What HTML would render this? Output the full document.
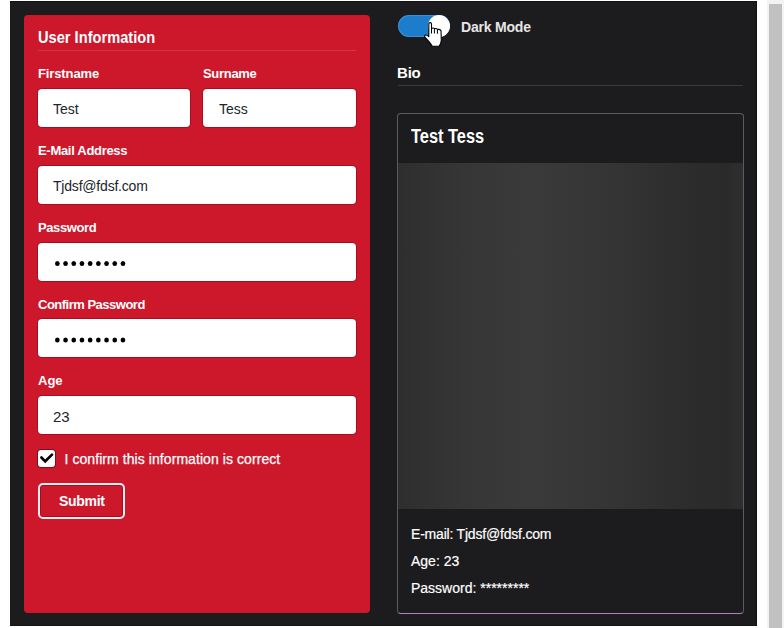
<!DOCTYPE html>
<html><head><meta charset="utf-8">
<style>
html,body{margin:0;padding:0;background:#fff;width:784px;height:628px;overflow:hidden;}
body{font-family:"Liberation Sans",sans-serif;position:relative;}
.a{position:absolute;white-space:nowrap;line-height:1;}
#app{position:absolute;left:10px;top:1px;width:746px;height:624px;background:#1c1c1e;border-top:1px solid #111;border-right:1px solid #111;border-bottom:1px solid #141414;box-sizing:border-box;width:747px;height:625px;}
#card{position:absolute;left:24px;top:15px;width:346px;height:598px;background:#cd182c;border-radius:4px;}
.lbl{color:#fff;font-weight:bold;font-size:13px;}
.inp{position:absolute;background:#fff;border-radius:4px;height:38px;box-shadow:0 0 0 1px rgba(120,0,15,0.45);}
.itx{color:#212529;font-size:14px;}
#sb{position:absolute;left:769px;top:4px;width:13px;height:624px;background:#c1c1c1;}
#track{position:absolute;left:767px;top:0;width:17px;height:628px;background:#f3f3f3;}
</style></head><body>
<div id="track"></div>
<div id="sb"></div>
<div id="app"></div>
<div id="card"></div>

<div class="a" style="left:38px;top:30px;font-size:16px;font-weight:bold;color:#fff;transform:scaleX(0.915);transform-origin:0 0">User Information</div>
<div style="position:absolute;left:38px;top:50px;width:318px;height:1px;background:rgba(255,255,255,0.13)"></div>

<div class="a lbl" style="left:38px;top:67px;letter-spacing:-0.12px">Firstname</div>
<div class="a lbl" style="left:203px;top:67px;letter-spacing:-0.3px">Surname</div>
<div class="inp" style="left:38px;top:89px;width:152px"></div>
<div class="inp" style="left:203px;top:89px;width:153px"></div>
<div class="a itx" style="left:53px;top:102px">Test</div>
<div class="a itx" style="left:219px;top:102px">Tess</div>

<div class="a lbl" style="left:38px;top:144px;letter-spacing:-0.3px">E-Mail Address</div>
<div class="inp" style="left:38px;top:166px;width:318px"></div>
<div class="a itx" style="left:53px;top:179px;letter-spacing:-0.2px">Tjdsf@fdsf.com</div>

<div class="a lbl" style="left:38px;top:221px;letter-spacing:-0.4px">Password</div>
<div class="inp" style="left:38px;top:243px;width:318px"></div>
<svg style="position:absolute;left:0;top:0" width="200" height="400" viewBox="0 0 200 400"><g fill="#000"><ellipse cx="57.35" cy="263.4" rx="2.35" ry="2.5"/><ellipse cx="65.55" cy="263.4" rx="2.35" ry="2.5"/><ellipse cx="73.75" cy="263.4" rx="2.35" ry="2.5"/><ellipse cx="81.95" cy="263.4" rx="2.35" ry="2.5"/><ellipse cx="90.15" cy="263.4" rx="2.35" ry="2.5"/><ellipse cx="98.35" cy="263.4" rx="2.35" ry="2.5"/><ellipse cx="106.55" cy="263.4" rx="2.35" ry="2.5"/><ellipse cx="114.75" cy="263.4" rx="2.35" ry="2.5"/><ellipse cx="122.95" cy="263.4" rx="2.35" ry="2.5"/></g></svg>

<div class="a lbl" style="left:38px;top:298px;letter-spacing:-0.5px">Confirm Password</div>
<div class="inp" style="left:38px;top:319px;width:318px"></div>
<svg style="position:absolute;left:0;top:0" width="200" height="400" viewBox="0 0 200 400"><g fill="#000"><ellipse cx="57.35" cy="340.1" rx="2.35" ry="2.5"/><ellipse cx="65.55" cy="340.1" rx="2.35" ry="2.5"/><ellipse cx="73.75" cy="340.1" rx="2.35" ry="2.5"/><ellipse cx="81.95" cy="340.1" rx="2.35" ry="2.5"/><ellipse cx="90.15" cy="340.1" rx="2.35" ry="2.5"/><ellipse cx="98.35" cy="340.1" rx="2.35" ry="2.5"/><ellipse cx="106.55" cy="340.1" rx="2.35" ry="2.5"/><ellipse cx="114.75" cy="340.1" rx="2.35" ry="2.5"/><ellipse cx="122.95" cy="340.1" rx="2.35" ry="2.5"/></g></svg>

<div class="a lbl" style="left:38px;top:374px">Age</div>
<div class="inp" style="left:38px;top:396px;width:318px"></div>
<div class="a itx" style="left:53px;top:409px;font-size:15px">23</div>

<div style="position:absolute;left:38px;top:450px;width:17px;height:17px;background:#fff;border-radius:3px;box-shadow:0 0 0 1px rgba(60,0,10,0.5)"></div>
<svg style="position:absolute;left:34px;top:446px" width="26" height="26" viewBox="0 0 26 26"><path d="M7.4 11.5 L11.2 15.3 L18 8.6" fill="none" stroke="#000" stroke-width="2.6" stroke-linecap="round" stroke-linejoin="miter"/></svg>
<div class="a" style="left:64.5px;top:452px;font-size:14px;color:#fff;letter-spacing:0.07px;-webkit-text-stroke:0.25px #fff">I confirm this information is correct</div>

<div style="position:absolute;left:38px;top:483px;width:83px;height:32px;border:2px solid #fdeef0;border-radius:5px;box-shadow:inset 0 0 0 1px rgba(90,0,10,0.35)"></div>
<div class="a lbl" style="left:59px;top:494px;font-size:14px;letter-spacing:-0.3px">Submit</div>

<!-- right column -->
<div style="position:absolute;left:398px;top:15px;width:52px;height:22px;border-radius:11px;background:#1c7dcc;box-shadow:inset 0 0 0 1px rgba(120,180,240,0.35)"></div>
<div style="position:absolute;left:428px;top:15px;width:22px;height:22px;border-radius:50%;background:#fff"></div>
<svg style="position:absolute;left:418px;top:14px" width="34" height="34" viewBox="0 0 34 34"><path d="M10.8 10 Q10.8 8.6 12.15 8.6 Q13.5 8.6 13.5 10 L13.5 14.6 Q15.3 13.4 16.6 14.8 Q18.4 13.9 19.6 15.5 Q21.6 14.9 23 16.6 L23.3 26 Q23.1 30 21.2 32.2 L14.3 32.2 Q12.4 29 9.2 25.6 Q6.2 22.6 6.6 21.6 Q8.2 20.1 10.8 22.6 Z" fill="#fff" stroke="#000" stroke-width="1.1" stroke-linejoin="round"/><path d="M16.4 15 L16.4 19.5 M19.4 15.8 L19.4 19.8 M13.5 14.6 L13.5 19.5" stroke="#000" stroke-width="1" fill="none"/></svg>
<div class="a" style="left:461px;top:20px;font-size:14px;font-weight:bold;color:#e6e6e6;letter-spacing:-0.2px">Dark Mode</div>

<div class="a" style="left:397px;top:65px;font-size:15px;font-weight:bold;color:#fff;letter-spacing:-0.2px">Bio</div>
<div style="position:absolute;left:398px;top:85px;width:345px;height:1px;background:#3a3a3c"></div>

<div style="position:absolute;left:397px;top:113px;width:345px;height:499px;border:1px solid #5c5c5c;border-bottom:1px solid #a883be;box-shadow:0 1px 0 0 #261a2e;border-radius:4px;background:#1c1b1d;overflow:hidden">
  <div style="position:absolute;left:0;top:49px;width:345px;height:346px;background:linear-gradient(90deg,#2e2e2e 0%,#363636 20%,#3a3a3a 38%,#353535 60%,#2c2c2c 85%,#2a2a2a 95%,#2f2f2f 100%)"></div>
</div>
<div class="a" style="left:411px;top:126px;font-size:20px;font-weight:bold;color:#fff;transform:scaleX(0.82);transform-origin:0 0">Test Tess</div>
<div class="a" style="left:411px;top:527px;font-size:14px;color:#fff;letter-spacing:-0.2px;-webkit-text-stroke:0.2px #fff">E-mail: Tjdsf@fdsf.com</div>
<div class="a" style="left:411px;top:554px;font-size:14px;color:#fff;-webkit-text-stroke:0.2px #fff">Age: 23</div>
<div class="a" style="left:411px;top:581px;font-size:14px;color:#fff;-webkit-text-stroke:0.2px #fff">Password: *********</div>
</body></html>
